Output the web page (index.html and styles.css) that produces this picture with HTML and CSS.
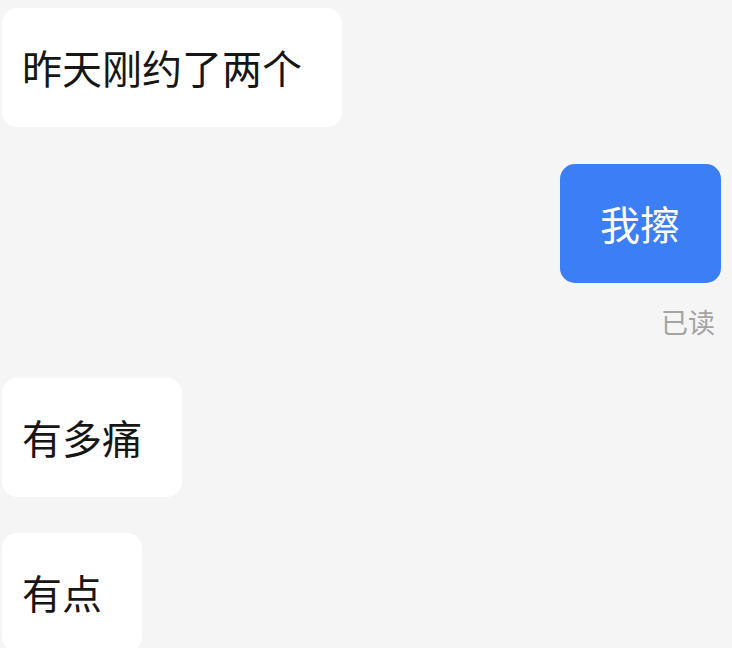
FILE: index.html
```html
<!DOCTYPE html>
<html lang="zh-CN">
<head>
    <meta charset="UTF-8">
    <meta name="viewport" content="width=device-width, initial-scale=1.0">
    <title>聊天</title>
    <link rel="stylesheet" href="styles.css">
</head>
<body>
<div class="chat">
    <div class="row left">
        <div class="bubble">昨天刚约了两个</div>
    </div>
    <div class="row right">
        <div class="bubble mine">我擦</div>
        <div class="status">已读</div>
    </div>
    <div class="row left">
        <div class="bubble">有多痛</div>
    </div>
    <div class="row left">
        <div class="bubble">有点</div>
    </div>
</div>
</body>
</html>
```

FILE: styles.css
```css
body {
    margin: 0;
    background-color: #f5f5f6;
    font-family: "Noto Sans CJK SC", "Noto Sans", sans-serif;
    overflow: hidden;
}
.chat {
    display: flex;
    flex-direction: column;
    padding-top: 8px;
}
.row {
    display: flex;
    flex-direction: column;
}
.row.left {
    align-items: flex-start;
    padding-left: 2px;
}
.row.right {
    align-items: flex-end;
    padding-right: 11px;
    margin-top: 37px;
}
.row.left + .row.left {
    margin-top: 36px;
}
.row.right + .row.left {
    margin-top: 38px;
}
.bubble {
    background-color: #fff;
    color: #161616;
    font-size: 40px;
    line-height: 55px;
    padding: 32px 40px 32px 20px;
    border-radius: 15px;
}
.bubble.mine {
    background-color: #3b7ef6;
    color: #fff;
    padding: 32px 41px 32px 40px;
}
.status {
    color: #a3a3a3;
    font-size: 27px;
    line-height: 36px;
    margin-top: 21px;
    margin-right: 6px;
}
```
